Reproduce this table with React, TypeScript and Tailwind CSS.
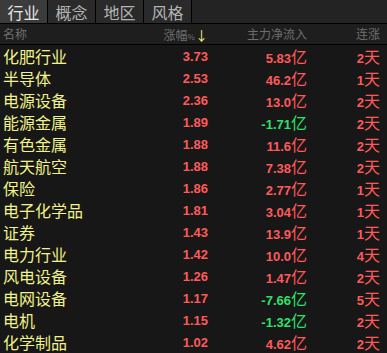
import React from 'react'

const TABS = ['行业', '概念', '地区', '风格']

const ROWS: [string, string, string, string][] = [
  ['化肥行业', '3.73', '5.83', '2'],
  ['半导体', '2.53', '46.2', '1'],
  ['电源设备', '2.36', '13.0', '2'],
  ['能源金属', '1.89', '-1.71', '2'],
  ['有色金属', '1.88', '11.6', '2'],
  ['航天航空', '1.88', '7.38', '2'],
  ['保险', '1.86', '2.77', '1'],
  ['电子化学品', '1.81', '3.04', '1'],
  ['证券', '1.43', '13.9', '1'],
  ['电力行业', '1.42', '10.0', '4'],
  ['风电设备', '1.26', '1.47', '2'],
  ['电网设备', '1.17', '-7.66', '5'],
  ['电机', '1.15', '-1.32', '2'],
  ['化学制品', '1.02', '4.62', '2'],
]

const cjk = { fontFamily: '"Noto Sans CJK SC", "Liberation Sans", sans-serif' }
const num = { fontFamily: '"Liberation Sans", Arial, sans-serif' }

export default function App() {
  return (
    <div className="w-[387px] h-[353px] overflow-hidden bg-[#171717]" style={cjk}>
      {/* tabs */}
      <div className="flex h-[24px] bg-[#232323] border-b border-black">
        {TABS.map((t, i) => (
          <div
            key={t}
            className={`w-[48px] flex items-center justify-center border-r border-black text-[16px] leading-none ${
              i === 0 ? 'bg-[#3b3b3b] text-[#e6e6e6]' : 'bg-[#2a2a2a] text-[#b4b4b4]'
            }`}
          >
            {t}
          </div>
        ))}
      </div>

      {/* header */}
      <div className="grid grid-cols-[1fr_82px_99px_73px] pl-[3px] pr-[7px] h-[21px] items-center bg-[#1e1e1e] border-b border-black text-[12px] text-[#6e6e6e] leading-none">
        <div>名称</div>
        <div className="text-right">
          涨幅<span className="text-[8px]">%</span>
          <span className="text-[#f0f07a] text-[13px]">↓</span>
        </div>
        <div className="text-right">主力净流入</div>
        <div className="text-right">连涨</div>
      </div>

      {/* rows */}
      {ROWS.map(([name, pct, flow, days]) => {
        const neg = flow.startsWith('-')
        return (
          <div
            key={name}
            className="grid grid-cols-[1fr_80px_99px_73px] pl-[3px] pr-[7px] h-[22px] items-center leading-none"
          >
            <div className="text-[16px] text-[#f2f28a]">{name}</div>
            <div className="text-right text-[13px] font-bold text-[#ff5a5a]" style={num}>
              {pct}
            </div>
            <div className={`text-right ${neg ? 'text-[#2fe06a]' : 'text-[#ff5a5a]'}`}>
              <span className="text-[13px] font-bold" style={num}>{flow}</span>
              <span className="text-[16px]">亿</span>
            </div>
            <div className="text-right text-[#ff5a5a]">
              <span className="text-[13px] font-bold" style={num}>{days}</span>
              <span className="text-[16px]">天</span>
            </div>
          </div>
        )
      })}
    </div>
  )
}
